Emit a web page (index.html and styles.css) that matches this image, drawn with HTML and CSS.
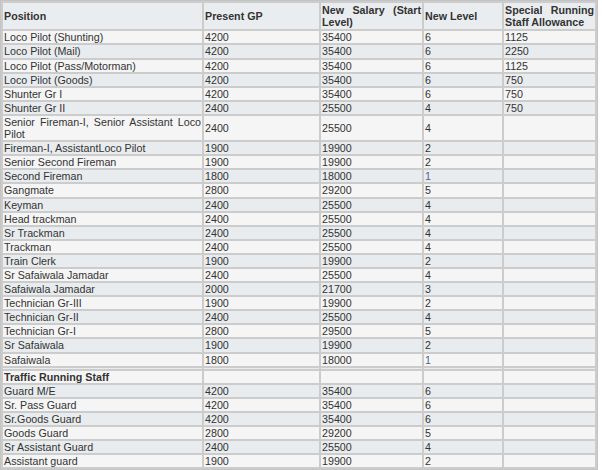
FILE: index.html
```html
<!DOCTYPE html>
<html>
<head>
<meta charset="utf-8">
<link rel="stylesheet" href="styles.css">
</head>
<body>
<table class="pay">
<colgroup>
<col class="c1"><col class="c2"><col class="c3"><col class="c4"><col class="c5">
</colgroup>
<thead>
<tr><th>Position</th><th>Present GP</th><th>New Salary (Start Level)</th><th>New Level</th><th>Special Running Staff Allowance</th></tr>
</thead>
<tbody>
<tr class="lt"><td>Loco Pilot (Shunting)</td><td>4200</td><td>35400</td><td>6</td><td>1125</td></tr>
<tr class="dk"><td>Loco Pilot (Mail)</td><td>4200</td><td>35400</td><td>6</td><td>2250</td></tr>
<tr class="lt"><td>Loco Pilot (Pass/Motorman)</td><td>4200</td><td>35400</td><td>6</td><td>1125</td></tr>
<tr class="dk"><td>Loco Pilot (Goods)</td><td>4200</td><td>35400</td><td>6</td><td>750</td></tr>
<tr class="lt"><td>Shunter Gr I</td><td>4200</td><td>35400</td><td>6</td><td>750</td></tr>
<tr class="dk"><td>Shunter Gr II</td><td>2400</td><td>25500</td><td>4</td><td>750</td></tr>
<tr class="lt"><td>Senior Fireman-I, Senior Assistant Loco Pilot</td><td>2400</td><td>25500</td><td>4</td><td></td></tr>
<tr class="dk"><td>Fireman-I, AssistantLoco Pilot</td><td>1900</td><td>19900</td><td>2</td><td></td></tr>
<tr class="lt"><td>Senior Second Fireman</td><td>1900</td><td>19900</td><td>2</td><td></td></tr>
<tr class="dk"><td>Second Fireman</td><td>1800</td><td>18000</td><td class="one">1</td><td></td></tr>
<tr class="lt"><td>Gangmate</td><td>2800</td><td>29200</td><td>5</td><td></td></tr>
<tr class="dk"><td>Keyman</td><td>2400</td><td>25500</td><td>4</td><td></td></tr>
<tr class="lt"><td>Head trackman</td><td>2400</td><td>25500</td><td>4</td><td></td></tr>
<tr class="dk"><td>Sr Trackman</td><td>2400</td><td>25500</td><td>4</td><td></td></tr>
<tr class="lt"><td>Trackman</td><td>2400</td><td>25500</td><td>4</td><td></td></tr>
<tr class="dk"><td>Train Clerk</td><td>1900</td><td>19900</td><td>2</td><td></td></tr>
<tr class="lt"><td>Sr Safaiwala Jamadar</td><td>2400</td><td>25500</td><td>4</td><td></td></tr>
<tr class="dk"><td>Safaiwala Jamadar</td><td>2000</td><td>21700</td><td>3</td><td></td></tr>
<tr class="lt"><td>Technician Gr-III</td><td>1900</td><td>19900</td><td>2</td><td></td></tr>
<tr class="dk"><td>Technician Gr-II</td><td>2400</td><td>25500</td><td>4</td><td></td></tr>
<tr class="lt"><td>Technician Gr-I</td><td>2800</td><td>29500</td><td>5</td><td></td></tr>
<tr class="dk"><td>Sr Safaiwala</td><td>1900</td><td>19900</td><td>2</td><td></td></tr>
<tr class="lt"><td>Safaiwala</td><td>1800</td><td>18000</td><td class="one">1</td><td></td></tr>
<tr class="dk gap"><td></td><td></td><td></td><td></td><td></td></tr>
<tr class="lt"><td class="sect">Traffic Running Staff</td><td></td><td></td><td></td><td></td></tr>
<tr class="dk"><td>Guard M/E</td><td>4200</td><td>35400</td><td>6</td><td></td></tr>
<tr class="lt"><td>Sr. Pass Guard</td><td>4200</td><td>35400</td><td>6</td><td></td></tr>
<tr class="dk"><td>Sr.Goods Guard</td><td>4200</td><td>35400</td><td>6</td><td></td></tr>
<tr class="lt"><td>Goods Guard</td><td>2800</td><td>29200</td><td>5</td><td></td></tr>
<tr class="dk"><td>Sr Assistant Guard</td><td>2400</td><td>25500</td><td>4</td><td></td></tr>
<tr class="lt"><td>Assistant guard</td><td>1900</td><td>19900</td><td>2</td><td></td></tr>
</tbody>
</table>
</body>
</html>
```
FILE: styles.css
```css
html, body {
  margin: 0;
  padding: 0;
  background: #ffffff;
}

.pay {
  table-layout: fixed;
  width: 598px;
  border-collapse: separate;
  border-spacing: 2px;
  background: #cccccc;
  border: 1px solid #c4c4c4;
  font-family: "Liberation Sans", Arial, sans-serif;
  font-size: 10.7px;
  line-height: 12.1px;
  color: #333333;
}

.c1 { width: 199px; }
.c2 { width: 115px; }
.c3 { width: 101px; }
.c4 { width: 78px; }
.c5 { width: 91px; }

.pay th,
.pay td {
  padding: 0 1px;
  text-align: justify;
  vertical-align: middle;
  overflow: hidden;
}

.pay th {
  font-weight: bold;
  background: #eaedef;
  padding-top: 1px;
  padding-bottom: 1px;
  height: 24.4px;
}

.lt td { background: #f5f5f5; }
.dk td { background: #e8ecee; }

.gap td {
  height: 1px;
  padding: 0;
  line-height: 0;
  font-size: 0;
}

.sect { font-weight: bold; }

.one { color: #4a6490; }
```
